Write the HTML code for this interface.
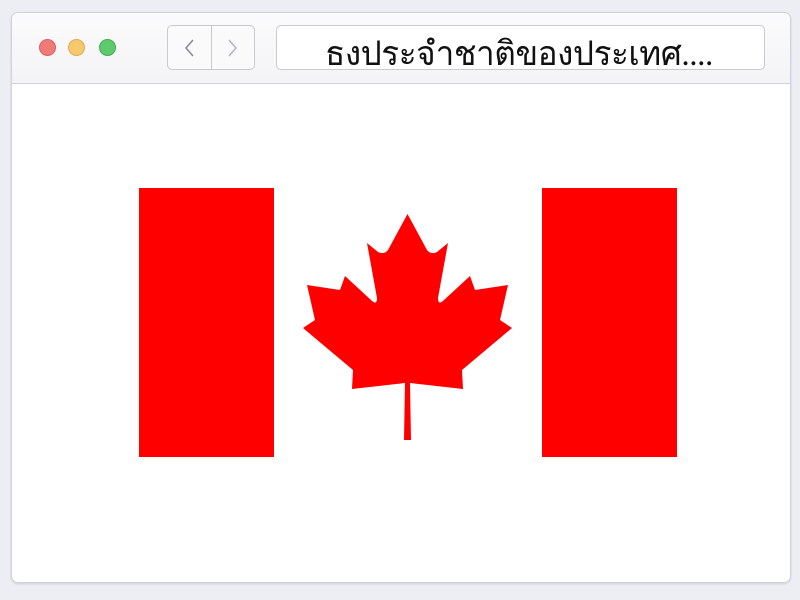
<!DOCTYPE html>
<html><head><meta charset="utf-8"><style>
html,body{margin:0;padding:0}
body{width:800px;height:600px;background:#eceef4;position:relative;overflow:hidden;font-family:"Liberation Serif","Noto Serif CJK SC",serif}
.win{position:absolute;left:11px;top:12px;width:778px;height:569px;background:#fff;border:1px solid #cfd2d8;border-radius:7px;box-shadow:0 1px 2px rgba(0,0,0,.12);overflow:hidden}
.bar{position:absolute;left:0;top:0;width:778px;height:70px;background:linear-gradient(#fbfbfc,#f4f4f6);border-bottom:1px solid #d0d2d7}
.dot{position:absolute;top:26px;width:15px;height:15px;border-radius:50%}
.nav{position:absolute;left:155px;top:12px;width:86px;height:43px;border:1px solid #c8cace;border-radius:5px;background:#fafafa}
.nav .d{position:absolute;left:43px;top:0;width:1px;height:43px;background:#c8cace}
.url{position:absolute;left:264px;top:12px;width:487px;height:43px;border:1px solid #c8cace;border-radius:5px;background:#fff}
.t{position:absolute;left:313px;top:20px;font-size:34px;color:#111;white-space:nowrap;letter-spacing:-0.5px;line-height:44px;transform:scaleX(.98);transform-origin:left}
.r{position:absolute;background:#ff0000;top:188px;height:269px;width:135px}
</style></head><body>
<div class="win">
 <div class="bar">
  <div class="dot" style="left:27px;background:#f07a78;border:0.5px solid #d8605e"></div>
  <div class="dot" style="left:56px;background:#f6c96c;border:0.5px solid #dcac4f"></div>
  <div class="dot" style="left:87px;background:#5fc96e;border:0.5px solid #43ac53"></div>
  <div class="nav"><div class="d"></div>
   <svg width="86" height="43" style="position:absolute;left:0;top:0"><path d="M25 14 L18 22 L25 30" fill="none" stroke="#8a8d93" stroke-width="1.6"/><path d="M61 14 L68 22 L61 30" fill="none" stroke="#b5b8bd" stroke-width="1.6"/></svg>
  </div>
  <div class="url"></div>
  <div class="t">ธงประจำชาติของประเทศ....</div>
 </div>
</div>
<div class="r" style="left:139px"></div>
<div class="r" style="left:542px"></div>
<svg width="800" height="600" style="position:absolute;left:0;top:0">
<path fill="#ff0000" d="M407.5 214 L427 250 Q431 255 437 252 L448 243 L438 298 Q438 306 444 300 L470 276 L475 290 L508 285 L500 320 L512 328 L462 370 L463 389 L410 383 L411 440 L404 440 L405 383 L352 389 L353 370 L303 328 L315 320 L307 285 L340 290 L345 276 L371 300 Q377 306 377 298 L367 243 L378 252 Q384 255 388 250 Z"/>
</svg>
</body></html>
